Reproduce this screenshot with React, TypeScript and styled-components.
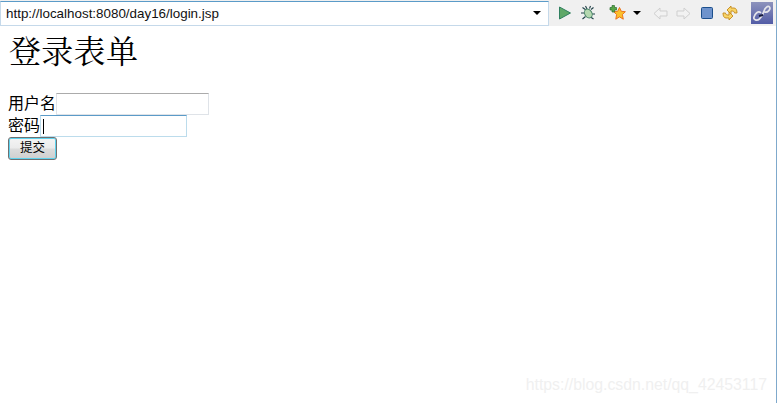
import React from 'react'
import styled, { createGlobalStyle } from 'styled-components'

const GlobalStyle = createGlobalStyle`
  html, body {
    margin: 0;
    padding: 0;
    background: #fff;
  }
`

const Window = styled.div`
  position: relative;
  width: 777px;
  height: 403px;
  overflow: hidden;
  background: #fff;
  border-right: 1px solid #7fa9cc;
  box-sizing: border-box;
`

const Toolbar = styled.div`
  display: flex;
  align-items: center;
  height: 26px;
  background: #f0f0f0;
`

const UrlBox = styled.div`
  display: flex;
  flex: none;
  align-items: center;
  justify-content: space-between;
  box-sizing: border-box;
  width: 549px;
  height: 25px;
  padding: 0 7px 0 5px;
  background: #fff;
  border: 1px solid #c5d9ea;
  border-top-color: #5b9bc8;
  font: 13.4px 'Liberation Sans', Arial, sans-serif;
  color: #111;
`

const Caret = styled.span`
  width: 0;
  height: 0;
  border-left: 4px solid transparent;
  border-right: 4px solid transparent;
  border-top: 4px solid #000;
`

const Tools = styled.div`
  display: flex;
  align-items: center;
  flex: 1;
  padding-left: 9px;
`

const ToolSlot = styled.span<{ $gap: number }>`
  display: flex;
  align-items: center;
  justify-content: center;
  margin-left: ${(p) => p.$gap}px;
  height: 24px;
  flex: none;
`

const Page = styled.div`
  padding: 0 8px;
  font-family: 'Liberation Serif', 'Noto Sans CJK SC', serif;
  color: #000;
`

const Title = styled.h1`
  margin: 6px 0 21px;
  padding-left: 1px;
  font-size: 32px;
  font-weight: 400;
  line-height: 40px;
  letter-spacing: 0.3px;
  font-family: 'Liberation Serif', 'Noto Serif CJK SC', 'Noto Sans CJK SC', serif;
`

const Row = styled.div`
  display: flex;
  align-items: center;
  height: 22px;
  font-size: 16px;
  font-family: 'Noto Sans CJK SC', sans-serif;
`

const RowLabel = styled.span`
  display: block;
  height: 22px;
  line-height: 18px;
`

const Field = styled.div<{ $w: number; $focus?: boolean }>`
  position: relative;
  box-sizing: border-box;
  width: ${(p) => p.$w}px;
  height: 22px;
  background: #fff;
  border: 1px solid ${(p) => (p.$focus ? '#bcdcec' : '#dfe3e8')};
  border-top-color: ${(p) => (p.$focus ? '#5b9bc8' : '#ababab')};
`

const TextCaret = styled.span`
  position: absolute;
  left: 2px;
  top: 3px;
  width: 1px;
  height: 15px;
  background: #000;
`

const Submit = styled.button`
  box-sizing: border-box;
  display: block;
  width: 49px;
  height: 23px;
  padding: 0 0 4px;
  border: 1px solid #707070;
  border-radius: 3px;
  box-shadow: inset 0 0 0 1px #5fd3ee;
  background: linear-gradient(#f4f4f4 0%, #ebebeb 48%, #dcdcdc 52%, #cfcfcf 100%);
  font: 12.5px/16px 'Noto Sans CJK SC', sans-serif;
  color: #000;
`

const Watermark = styled.div`
  position: absolute;
  right: 9px;
  bottom: 9px;
  font: 15.8px 'Liberation Sans', Arial, sans-serif;
  color: #f0f0f0;
`

const RunIcon = () => (
  <svg width="14" height="14" viewBox="0 0 14 14">
    <path d="M1.500 1 L12.500 7 L1.500 13 Z" fill="#5fa868" stroke="#2f7f5f" />
  </svg>
)

const BugIcon = () => (
  <svg width="16" height="16" viewBox="0 0 16 16" fill="none">
    <path d="M2.500 2.500l3.500 2.500M13.500 2.500l-2.500 2M1 8h3.500M15 9h-3M2.500 14l3-2.500M13.500 14l-3-2M5.500 1l1.500 3M10.500 1l-1 2.500" stroke="#1f4048" strokeWidth="1.100" />
    <ellipse cx="8.300" cy="8.500" rx="3.600" ry="4.700" fill="#b4d8b0" stroke="#4a8468" transform="rotate(-30 8.300 8.500)" />
  </svg>
)

const StarIcon = () => (
  <svg width="17" height="16" viewBox="0 0 17 16">
    <path d="M10.500 2.500l1.800 3.800 4.100.4-3 2.800.9 4.700-3.800-2.300-3.700 2.300.8-4.700-3-2.800 4.100-.4z" fill="#fbc02c" stroke="#ea6a14" strokeWidth="0.900" />
    <path d="M3 0.500h2.500v2H7.500v2.500H5.500v2H3V5H1V2.500h2z" fill="#58a848" stroke="#2c6e30" strokeWidth="0.700" />
  </svg>
)

const ArrowIcon = ({ flip }: { flip?: boolean }) => (
  <svg width="15" height="13" viewBox="0 0 15 13" style={flip ? { transform: 'scaleX(-1)' } : undefined}>
    <path d="M1 6.500 L7 1 V4 H14 V9 H7 V12 Z" fill="#f2f2f2" stroke="#cfcfcf" />
  </svg>
)

const StopIcon = () => (
  <svg width="12" height="12" viewBox="0 0 12 12">
    <rect x="0.500" y="0.500" width="11" height="11" rx="1" fill="#6e93cc" stroke="#1c4f8c" />
  </svg>
)

const SyncIcon = () => (
  <svg width="16" height="16" viewBox="0 0 16 16">
    <path d="M5 5 L9 1 V3 H12 C14 3 15 5 15 8 L12.500 8 C12.500 6.500 11.500 6 10 6 H9 V9 Z" fill="#f8d468" stroke="#c48a1c" strokeWidth="0.900" />
    <path d="M11 11 L7 15 V13 H4 C2 13 1 11 1 8 L3.500 8 C3.500 9.500 4.500 10 6 10 H7 V7 Z" fill="#f8d468" stroke="#c48a1c" strokeWidth="0.900" />
  </svg>
)

const PerspectiveIcon = () => (
  <svg width="22" height="22" viewBox="0 0 22 22">
    <defs>
      <linearGradient id="persp" x1="0" y1="0" x2="0" y2="1">
        <stop offset="0" stopColor="#8d93bc" />
        <stop offset="1" stopColor="#525ca6" />
      </linearGradient>
    </defs>
    <rect width="22" height="22" fill="url(#persp)" />
    <path d="M10 11 C7 8 4 12 3 15 C2 18 6 19 8.500 17 C10.500 15 12 12 13 9 C14 6 17 3 18.500 5 C20 7 17 11 13.500 10" fill="none" stroke="#e4e4ea" strokeWidth="1.700" />
    <path d="M8 14 L12 13" stroke="#14183c" strokeWidth="2" />
  </svg>
)

const App = () => (
  <Window>
    <GlobalStyle />
    <Toolbar>
      <UrlBox>
        <span>http://localhost:8080/day16/login.jsp</span>
        <Caret />
      </UrlBox>
      <Tools>
        <ToolSlot $gap={0}><RunIcon /></ToolSlot>
        <ToolSlot $gap={8}><BugIcon /></ToolSlot>
        <ToolSlot $gap={13}><StarIcon /></ToolSlot>
        <ToolSlot $gap={7}><Caret /></ToolSlot>
        <ToolSlot $gap={12}><ArrowIcon /></ToolSlot>
        <ToolSlot $gap={8}><ArrowIcon flip /></ToolSlot>
        <ToolSlot $gap={10}><StopIcon /></ToolSlot>
        <ToolSlot $gap={9}><SyncIcon /></ToolSlot>
        <ToolSlot $gap={13}><PerspectiveIcon /></ToolSlot>
      </Tools>
    </Toolbar>
    <Page>
      <Title>登录表单</Title>
      <Row><RowLabel>用户名</RowLabel><Field $w={153} /></Row>
      <Row><RowLabel>密码</RowLabel><Field $w={147} $focus><TextCaret /></Field></Row>
      <Submit>提交</Submit>
    </Page>
    <Watermark>https://blog.csdn.net/qq_42453117</Watermark>
  </Window>
)

export default App
